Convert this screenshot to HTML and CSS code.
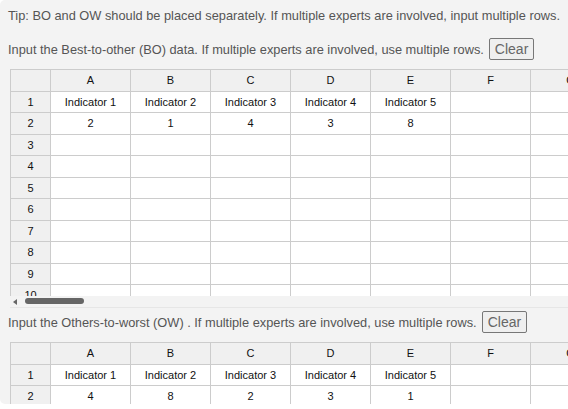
FILE: index.html
```html
<!DOCTYPE html>
<html lang="en">
<head>
    <meta charset="UTF-8">
    <meta name="viewport" content="width=device-width, initial-scale=1.0">
    <title>BWM input</title>
    <link rel="stylesheet" href="styles.css">
</head>
<body>
    <div class="panel">
        <p class="tip">Tip: BO and OW should be placed separately. If multiple experts are involved, input multiple rows.</p>

        <!-- Best-to-other table -->
        <div class="input-row">
            <span>Input the Best-to-other (BO) data. If multiple experts are involved, use multiple rows.</span>
            <button class="clear-btn">Clear</button>
        </div>
        <div class="grid-wrap bo-grid">
            <table class="grid">
                <tr class="col-head">
                    <td class="row-head"></td><td>A</td><td>B</td><td>C</td><td>D</td><td>E</td><td>F</td><td>G</td>
                </tr>
                <tr>
                    <td class="row-head">1</td><td>Indicator 1</td><td>Indicator 2</td><td>Indicator 3</td><td>Indicator 4</td><td>Indicator 5</td><td></td><td></td>
                </tr>
                <tr>
                    <td class="row-head">2</td><td>2</td><td>1</td><td>4</td><td>3</td><td>8</td><td></td><td></td>
                </tr>
                <tr><td class="row-head">3</td><td></td><td></td><td></td><td></td><td></td><td></td><td></td></tr>
                <tr><td class="row-head">4</td><td></td><td></td><td></td><td></td><td></td><td></td><td></td></tr>
                <tr><td class="row-head">5</td><td></td><td></td><td></td><td></td><td></td><td></td><td></td></tr>
                <tr><td class="row-head">6</td><td></td><td></td><td></td><td></td><td></td><td></td><td></td></tr>
                <tr><td class="row-head">7</td><td></td><td></td><td></td><td></td><td></td><td></td><td></td></tr>
                <tr><td class="row-head">8</td><td></td><td></td><td></td><td></td><td></td><td></td><td></td></tr>
                <tr><td class="row-head">9</td><td></td><td></td><td></td><td></td><td></td><td></td><td></td></tr>
                <tr><td class="row-head">10</td><td></td><td></td><td></td><td></td><td></td><td></td><td></td></tr>
            </table>
        </div>
        <div class="scrollbar">
            <span class="scroll-arrow"></span>
            <span class="scroll-thumb"></span>
        </div>

        <!-- Others-to-worst table -->
        <div class="input-row ow-row">
            <span>Input the Others-to-worst (OW) . If multiple experts are involved, use multiple rows.</span>
            <button class="clear-btn">Clear</button>
        </div>
        <div class="grid-wrap ow-grid">
            <table class="grid">
                <tr class="col-head">
                    <td class="row-head"></td><td>A</td><td>B</td><td>C</td><td>D</td><td>E</td><td>F</td><td>G</td>
                </tr>
                <tr>
                    <td class="row-head">1</td><td>Indicator 1</td><td>Indicator 2</td><td>Indicator 3</td><td>Indicator 4</td><td>Indicator 5</td><td></td><td></td>
                </tr>
                <tr>
                    <td class="row-head">2</td><td>4</td><td>8</td><td>2</td><td>3</td><td>1</td><td></td><td></td>
                </tr>
            </table>
        </div>
    </div>
</body>
</html>
```

FILE: styles.css
```css
* {
    margin: 0;
    font-family: "Liberation Sans", Arial, Helvetica, sans-serif;
}

body {
    background: #fff;
    overflow: hidden;
}

.panel {
    width: 640px;
    height: 404px;
    padding: 6px 0 0 8px;
    box-sizing: border-box;
    background: #f3f3f3;
    border-radius: 5px;
    color: #555;
    font-size: 12.8px;
}

.tip {
    line-height: 20px;
}

.input-row {
    display: flex;
    align-items: center;
    gap: 5px;
    margin-top: 12px;
    height: 22px;
}

.clear-btn {
    height: 22px;
    padding: 0 5px;
    font-size: 14px;
    color: #666;
    background: #efefef;
    border: 1px solid #777;
    border-radius: 2px;
}

.grid-wrap {
    margin: 9px 0 0 2px;
    overflow: hidden;
}

.bo-grid {
    height: 227px;
}

.grid {
    border-collapse: collapse;
    table-layout: fixed;
    background: #fff;
}

.grid td {
    width: 79px;
    height: 20.5px;
    padding: 0;
    border: 1px solid #ccc;
    text-align: center;
    font-size: 11px;
    color: #111;
}

.grid td.row-head {
    width: 39px;
    background: #f0f0f0;
}

.col-head td {
    background: #f0f0f0;
    border-bottom: none;
}

.scrollbar {
    position: relative;
    height: 11px;
    margin-left: 2px;
    background: #f3f3f3;
    border-bottom: 1px solid #e6e6e6;
}

.scroll-arrow {
    position: absolute;
    left: 3px;
    top: 3px;
    border-right: 4px solid #666;
    border-top: 3px solid transparent;
    border-bottom: 3px solid transparent;
}

.scroll-thumb {
    position: absolute;
    left: 15px;
    top: 2px;
    width: 59px;
    height: 6px;
    background: #666;
    border-radius: 3px;
}

.ow-row {
    margin-top: 3px;
}
```
